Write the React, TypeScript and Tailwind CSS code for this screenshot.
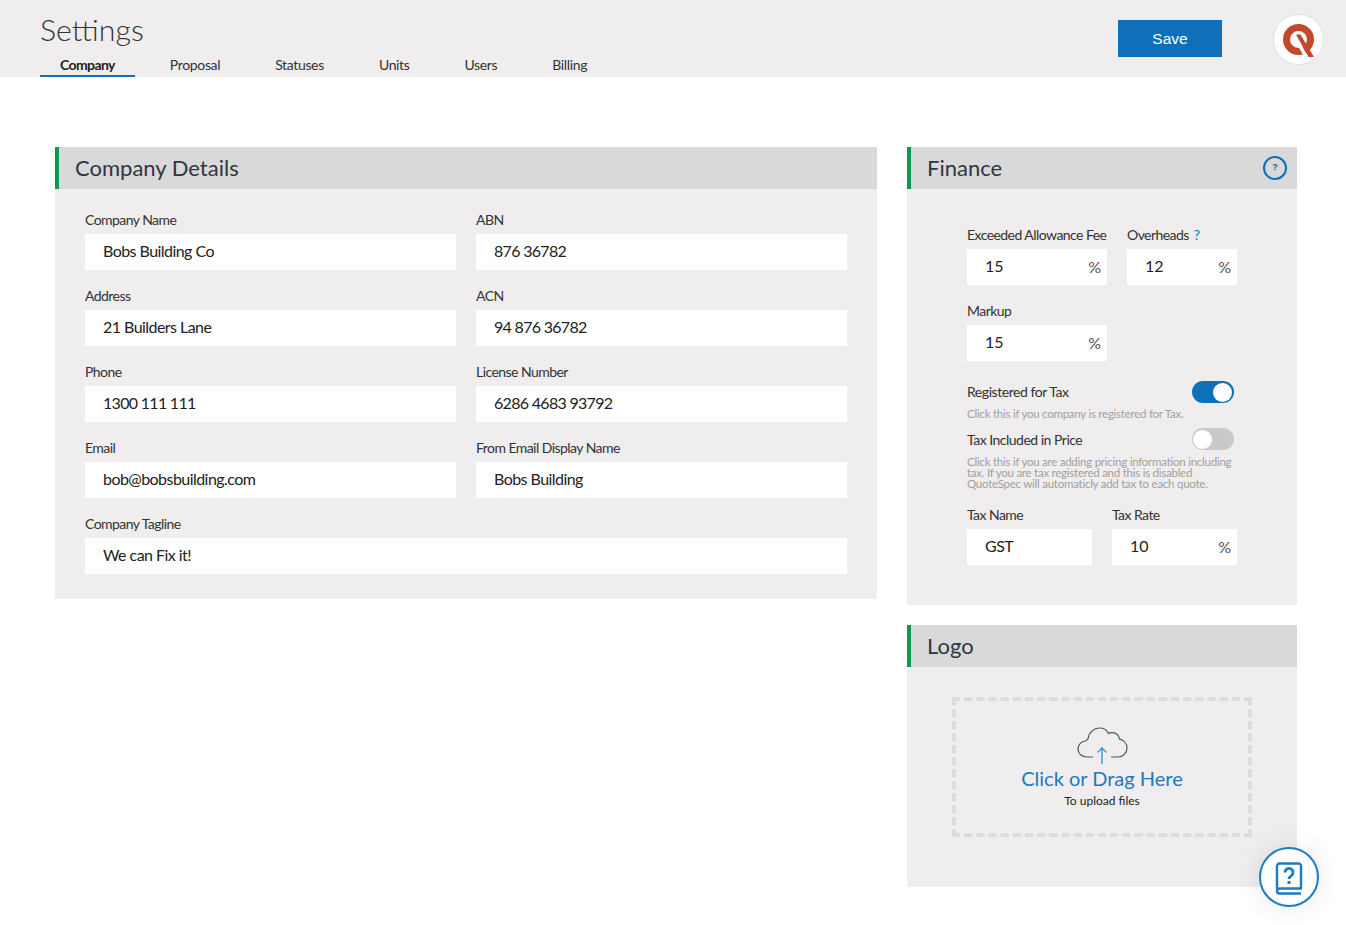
import React from "react";

const labelCls = "h-5 mb-1 text-[14px] leading-5 text-[#333] tracking-[-0.55px] whitespace-nowrap";
const inputCls = "h-9 bg-white pl-[18px] text-[16px] leading-[34px] text-[#222] tracking-[-0.55px]";
const numericCls = "h-9 bg-white pl-[18px] text-[16px] leading-[34px] text-[#222] tracking-[-0.7px]";

function Field({ label, value, numeric = false, className = "" }: { label: string; value: string; numeric?: boolean; className?: string }) {
  return (
    <div className={className}>
      <div className={labelCls}>{label}</div>
      <div className={numeric ? numericCls : inputCls}>{value}</div>
    </div>
  );
}

function PctField({ label, value, w, extra }: { label: string; value: string; w: string; extra?: React.ReactNode }) {
  return (
    <div className={w}>
      <div className={labelCls}>
        {label}
        {extra}
      </div>
      <div className="h-9 bg-white pl-[18px] pr-[6px] flex justify-between text-[16px] leading-[34px] text-[#222]">
        <span>{value}</span>
        <span className="text-[#555] mt-px">%</span>
      </div>
    </div>
  );
}

function PanelHeader({ title, children }: { title: string; children?: React.ReactNode }) {
  return (
    <div className="h-[42px] bg-[#d9d9d9] border-l-4 border-[#0a9b4e] pl-4 pr-[10px] flex items-center justify-between">
      <span className="text-[22px] leading-[42px] text-[#2f3640]">{title}</span>
      {children}
    </div>
  );
}

function Toggle({ on }: { on: boolean }) {
  return (
    <div
      className={
        on
          ? "w-[42px] h-[22px] rounded-full bg-[#0e70b8] flex items-center justify-end pr-[2px]"
          : "w-[42px] h-[22px] rounded-full bg-[#c9c9c9] flex items-center justify-start pl-[1px]"
      }
    >
      <div className="w-[19px] h-[19px] rounded-full bg-white" />
    </div>
  );
}

const tabs = ["Company", "Proposal", "Statuses", "Units", "Users", "Billing"];

export default function App() {
  return (
    <div className="relative h-[925px] overflow-hidden bg-white font-['Lato',sans-serif]">
      <header className="h-[77px] bg-[#efedee] pl-10 pr-[22px] flex justify-between">
        <div className="flex flex-col">
          <h1 className="h-[54px] pt-[9px] text-[30.300px] leading-10 font-light text-[#333]">Settings</h1>
          <nav className="flex gap-[15px]">
            {tabs.map((t, i) => (
              <div
                key={t}
                className={
                  i === 0
                    ? "h-[23px] px-5 text-[14px] leading-[22px] font-bold text-[#222] border-b-2 border-[#0e70b8] tracking-[-0.6px]"
                    : "h-[23px] px-5 text-[14px] leading-[22px] text-[#333] tracking-[-0.35px]"
                }
              >
                {t}
              </div>
            ))}
          </nav>
        </div>
        <div className="flex items-start">
          <button className="mt-5 w-[104px] h-[37px] bg-[#0e70b8] text-white text-[15.500px] font-['Liberation_Sans',sans-serif] mr-[51px]">
            Save
          </button>
          <div className="mt-[14px] w-[51px] h-[51px] rounded-full bg-white border border-[#e2e2e2] flex items-center justify-center">
            <svg width="32" height="34" viewBox="0 0 32 34" className="mt-[2px]">
              <circle cx="15.500" cy="15.500" r="12" fill="none" stroke="#c2492c" strokeWidth="7" />
              <polygon points="10.500,14 13,10.500 25.500,33.500 21.500,33.500" fill="#ffffff" />
              <polygon points="13,10.500 17.500,10.500 31,33 25.500,33" fill="#c2492c" />
            </svg>
          </div>
        </div>
      </header>

      <main className="pl-[55px] pt-[70px] flex items-start gap-[30px]">
        <section className="w-[822px] bg-[#efedee]">
          <PanelHeader title="Company Details" />
          <div className="pt-[21px] px-[30px] pb-[25px] grid grid-cols-2 gap-x-5 gap-y-4">
            <Field label="Company Name" value="Bobs Building Co" />
            <Field label="ABN" value="876 36782" numeric />
            <Field label="Address" value="21 Builders Lane" />
            <Field label="ACN" value="94 876 36782" numeric />
            <Field label="Phone" value="1300 111 111" numeric />
            <Field label="License Number" value="6286 4683 93792" numeric />
            <Field label="Email" value="bob@bobsbuilding.com" />
            <Field label="From Email Display Name" value="Bobs Building" />
            <Field label="Company Tagline" value="We can Fix it!" className="col-span-2" />
          </div>
        </section>

        <div className="w-[390px] flex flex-col gap-5">
          <section className="bg-[#efedee]">
            <PanelHeader title="Finance">
              <div className="w-6 h-6 rounded-full border-2 border-[#0e70b8] flex items-center justify-center text-[9px] font-bold text-[#2b5f8c] font-['Liberation_Sans',sans-serif]">
                ?
              </div>
            </PanelHeader>
            <div className="pt-9 px-[60px] pb-10">
              <div className="flex gap-5">
                <PctField label="Exceeded Allowance Fee" value="15" w="w-[140px]" />
                <PctField
                  label="Overheads"
                  value="12"
                  w="w-[110px]"
                  extra={<span className="ml-[5px] text-[#0e70b8]">?</span>}
                />
              </div>
              <div className="mt-4">
                <PctField label="Markup" value="15" w="w-[140px]" />
              </div>
              <div className="mt-5 flex items-center justify-between pr-[3px] h-[22px]">
                <span className="text-[14px] leading-5 -mt-px text-[#333] tracking-[-0.45px]">Registered for Tax</span>
                <Toggle on />
              </div>
              <p className="mt-[5px] text-[11.500px] leading-[11px] text-[#a0a0a0] tracking-[-0.25px] whitespace-nowrap">
                Click this if you company is registered for Tax.
              </p>
              <div className="mt-[9px] flex items-center justify-between pr-[3px] h-[22px]">
                <span className="text-[14px] leading-5 mt-px text-[#333] tracking-[-0.5px]">Tax Included in Price</span>
                <Toggle on={false} />
              </div>
              <p className="mt-[6px] text-[11.500px] leading-[11px] text-[#a0a0a0] tracking-[-0.25px] whitespace-nowrap">
                Click this if you are adding pricing information including
                <br />
                tax. If you are tax registered and this is disabled
                <br />
                QuoteSpec will automaticly add tax to each quote.
              </p>
              <div className="mt-4 flex gap-5">
                <div className="w-[125px]">
                  <div className={labelCls}>Tax Name</div>
                  <div className={inputCls}>GST</div>
                </div>
                <PctField label="Tax Rate" value="10" w="w-[125px]" />
              </div>
            </div>
          </section>

          <section className="bg-[#efedee] h-[262px]">
            <PanelHeader title="Logo" />
            <div className="pt-[30px] pl-[45px]">
              <div className="w-[300px] h-[140px] border-[4px] border-dashed border-[#dcdcdc] flex flex-col items-center pt-[26px]">
                <svg width="52" height="40" viewBox="0 0 52 40" fill="none" className="block ml-[2px]">
                  <path
                    d="M16 30H10C4.500 30 1 26.500 1 22c0-4.500 3.500-8 8-8 .5-1 1.200-1.700 2-2.200C12 5 17 1 22.500 1c4 0 7.500 2 9 5.500 1.500-.8 3-1 4.500-.8 3.500.5 6 3 6.500 6.500 4 .8 7.500 4 7.500 8.800 0 5-4 9-9 9h-7"
                    stroke="#555"
                    strokeWidth="1.200"
                  />
                  <path d="M25 37V21M20.500 25.500 25 21l4.500 4.500" stroke="#3f97d0" strokeWidth="1.400" />
                </svg>
                <div className="-mt-[3px] text-[20px] leading-7 text-[#1f78c1]">Click or Drag Here</div>
                <div className="mt-[1px] text-[12px] leading-4 text-[#222]">To upload files</div>
              </div>
            </div>
          </section>
        </div>
      </main>

      <div className="absolute left-[1259px] top-[847px] w-[60px] h-[60px] rounded-full bg-white border-2 border-[#1b7cc0] shadow-[0_0_24px_rgba(0,0,0,0.1)] flex items-center justify-center">
        <svg width="28" height="33" viewBox="0 0 28 33" fill="none" stroke="#1b7cc0" strokeWidth="2.400" className="mt-[2px]">
          <path d="M2 27V4a2.500 2.500 0 0 1 2.500-2.500h19A2.500 2.500 0 0 1 26 4v22.500H5a3 3 0 0 0-3 2.500v0a2.500 2.500 0 0 0 2.500 2.500H26" strokeLinejoin="round" />
          <path d="M10 10.500a4 4 0 1 1 6.300 3.200c-1.400 1-2.300 1.600-2.300 3.300" strokeWidth="2.800" />
          <path d="M14 19v3" strokeWidth="3" />
        </svg>
      </div>
    </div>
  );
}
